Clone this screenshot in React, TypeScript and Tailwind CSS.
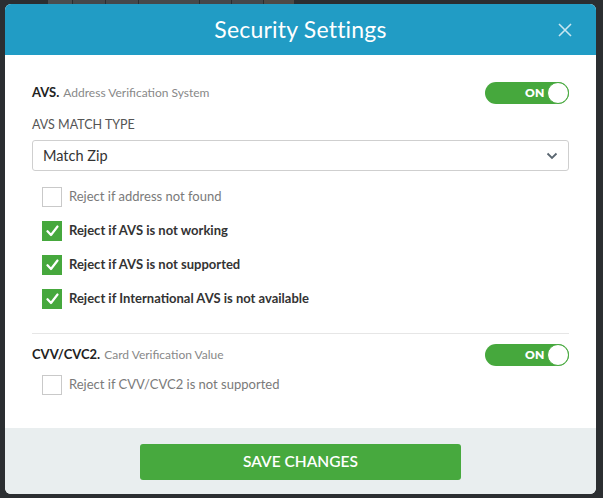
import React from "react";

const font = { fontFamily: "Lato, 'Open Sans', sans-serif" };

function Toggle() {
  return (
    <div className="relative flex h-[22px] w-[84px] items-center rounded-full bg-[#46a83d]">
      <span className="ml-[40px] text-[12px] font-extrabold tracking-[0.3px] text-white">ON</span>
      <span className="absolute right-0 top-0 h-[22px] w-[22px] rounded-full border border-[#46a83d] bg-white" />
    </div>
  );
}

function Check({ checked, label }: { checked: boolean; label: string }) {
  return (
    <div className="flex h-[20px] items-center pl-[10px]">
      {checked ? (
        <span className="flex h-[20px] w-[20px] items-center justify-center bg-[#46a83d]">
          <svg width="13" height="12" viewBox="0 0 13 12" fill="none">
            <path d="M1.5 6.2 L5 10 L11.5 1.5" stroke="white" strokeWidth="2.2" strokeLinecap="round" strokeLinejoin="round" />
          </svg>
        </span>
      ) : (
        <span className="h-[20px] w-[20px] border border-[#c9c9c9] bg-white" />
      )}
      <span
        className={
          checked
            ? "ml-[7px] text-[13px] font-bold text-[#333]"
            : "ml-[7px] text-[13px] text-[#7a7a7a]"
        }
      >
        {label}
      </span>
    </div>
  );
}

export default function App() {
  return (
    <div className="h-[498px] w-[603px] overflow-hidden bg-[#2b2e31]" style={font}>
      <div className="flex h-[4px] gap-[1px] pl-[48px]">
        <div className="w-[24px] bg-[#4a4d50]" />
        <div className="w-[32px] bg-[#45484b]" />
        <div className="w-[32px] bg-[#45484b]" />
        <div className="w-[60px] bg-[#46494c]" />
        <div className="w-[31px] bg-[#45484b]" />
        <div className="w-[31px] bg-[#45484b]" />
        <div className="w-[30px] bg-[#4e4a46]" />
      </div>
      <div className="ml-[5px] flex h-[490px] w-[591px] flex-col overflow-hidden rounded-[6px] bg-white">
        <div className="relative flex h-[51px] items-center justify-center bg-[#219cc5]">
          <span className="text-[23px] tracking-[0.2px] text-white">Security Settings</span>
          <svg className="absolute left-[553px] top-[19px]" width="14" height="14" viewBox="0 0 14 14">
            <path d="M1 1 L13 13 M13 1 L1 13" stroke="rgba(255,255,255,0.75)" strokeWidth="1.6" />
          </svg>
        </div>
        <div className="flex flex-1 flex-col px-[27px] pt-[27px]">
          <div className="flex h-[22px] items-center justify-between">
            <div className="flex items-baseline">
              <span className="text-[13px] font-bold text-[#222]">AVS.</span>
              <span className="ml-[4px] text-[12px] text-[#888]">Address Verification System</span>
            </div>
            <Toggle />
          </div>
          <div className="mt-[13px] h-[16px] text-[12.5px] leading-[16px] text-[#555]">AVS MATCH TYPE</div>
          <div className="mt-[7px] flex h-[31px] items-center justify-between rounded-[3px] border border-[#cfcfcf] pl-[10px] pr-[10px]">
            <span className="text-[14.5px] text-[#333]">Match Zip</span>
            <svg width="12" height="8" viewBox="0 0 12 8">
              <path d="M1.5 1.5 L6 6 L10.5 1.5" stroke="#5a6670" strokeWidth="1.8" fill="none" />
            </svg>
          </div>
          <div className="mt-[16px] flex flex-col gap-[14px]">
            <Check checked={false} label="Reject if address not found" />
            <Check checked label="Reject if AVS is not working" />
            <Check checked label="Reject if AVS is not supported" />
            <Check checked label="Reject if International AVS is not available" />
          </div>
          <div className="mt-[24px] h-px bg-[#e6e6e6]" />
          <div className="mt-[10px] flex h-[22px] items-center justify-between">
            <div className="flex items-baseline">
              <span className="text-[13px] font-bold text-[#222]">CVV/CVC2.</span>
              <span className="ml-[4px] text-[12px] text-[#888]">Card Verification Value</span>
            </div>
            <Toggle />
          </div>
          <div className="mt-[9px]">
            <Check checked={false} label="Reject if CVV/CVC2 is not supported" />
          </div>
        </div>
        <div className="flex h-[66px] justify-center bg-[#e9eeef] pt-[16px]">
          <button className="h-[36px] w-[321px] rounded-[3px] bg-[#47a93e] text-[15.5px] font-semibold text-white">
            SAVE CHANGES
          </button>
        </div>
      </div>
    </div>
  );
}
